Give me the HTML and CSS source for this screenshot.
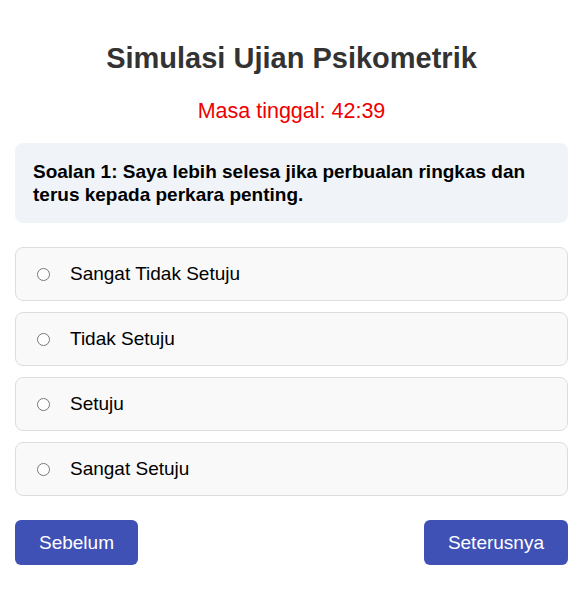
FILE: index.html
```html
<!DOCTYPE html>
<html lang="ms">
<head>
  <meta charset="UTF-8" />
  <title>Simulasi Ujian Psikometrik</title>
  <link rel="stylesheet" href="styles.css">
</head>
<body>

<div class="container">
  <h1>Simulasi Ujian Psikometrik</h1>
  <div class="timer">Masa tinggal: <span id="time">42:39</span></div>

  <div class="question">
    Soalan 1: Saya lebih selesa jika perbualan ringkas dan terus kepada perkara penting.
  </div>

  <div class="options">
    <label class="option"><input type="radio" name="q1" value="1" /> Sangat Tidak Setuju</label>
    <label class="option"><input type="radio" name="q1" value="2" /> Tidak Setuju</label>
    <label class="option"><input type="radio" name="q1" value="3" /> Setuju</label>
    <label class="option"><input type="radio" name="q1" value="4" /> Sangat Setuju</label>
  </div>

  <div class="nav-buttons">
    <button class="btn">Sebelum</button>
    <button class="btn">Seterusnya</button>
  </div>
</div>

</body>
</html>
```

FILE: styles.css
```css
body {
  margin: 0;
  padding: 15px 14px 15px 15px;
  font-family: Arial, "Liberation Sans", sans-serif;
  background-color: #fff;
  color: #000;
}
.container {
  max-width: 600px;
  margin: 0 auto;
}
h1 {
  text-align: center;
  color: #333;
  font-size: 29px;
  margin: 27px 0 0;
}
.timer {
  text-align: center;
  color: #e00;
  font-size: 21.5px;
  margin: 24px 0 19px;
}
.question {
  background-color: #f0f4f8;
  border-radius: 8px;
  padding: 17px 18px;
  font-size: 19px;
  font-weight: bold;
  line-height: 23px;
  margin-bottom: 24px;
}
.options {
  display: flex;
  flex-direction: column;
  gap: 11px;
}
.option {
  display: flex;
  align-items: center;
  background-color: #f9f9f9;
  border: 1px solid #ddd;
  border-radius: 8px;
  padding: 15px;
  font-size: 19px;
  line-height: 22px;
  cursor: pointer;
}
.option input {
  margin: 0 20px 0 6px;
}
.nav-buttons {
  display: flex;
  justify-content: space-between;
  margin-top: 24px;
}
.btn {
  background-color: #3f51b5;
  color: #fff;
  border: none;
  border-radius: 6px;
  font-family: Arial, "Liberation Sans", sans-serif;
  font-size: 19px;
  line-height: 21px;
  padding: 12px 24px;
  cursor: pointer;
}
```
